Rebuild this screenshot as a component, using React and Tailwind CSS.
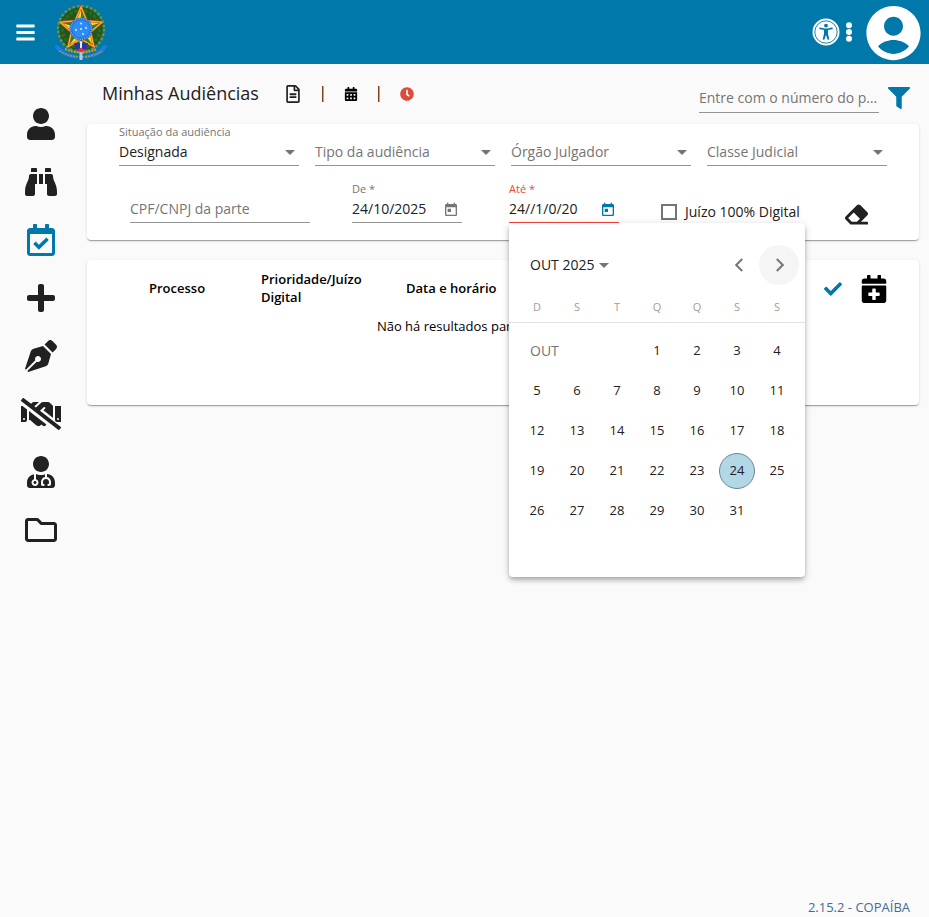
import React, { useState } from "react";
import {
  FaBars, FaRegFileAlt, FaCalendarAlt, FaClock, FaUser, FaBinoculars, FaRegCalendarCheck,
  FaPlus, FaPenNib, FaHandshakeSlash, FaUserMd, FaRegFolder, FaFilter, FaEraser, FaCheck,
  FaCalendarPlus,
} from "react-icons/fa";

function starPoints(cx, cy, outer, inner) {
  return Array.from({ length: 10 }, (_, i) => {
    const r = i % 2 === 0 ? outer : inner;
    const a = (Math.PI / 5) * i - Math.PI / 2;
    return `${(cx + r * Math.cos(a)).toFixed(2)},${(cy + r * Math.sin(a)).toFixed(2)}`;
  }).join(" ");
}

function CoatOfArms() {
  const points = starPoints(27, 26, 22, 10).split(" ");
  return (
    <svg width="54" height="58" viewBox="0 0 54 58" role="img" aria-label="Brasão da República">
      <circle cx="27" cy="26" r="22" fill="#1f5a1c" />
      <circle cx="27" cy="26" r="23" fill="none" stroke="#7d8f35" strokeWidth="2.5" strokeDasharray="2.5 2" />
      <circle cx="27" cy="26" r="18.500" fill="none" stroke="#2c6a22" strokeWidth="3" strokeDasharray="3 2" />
      <path d="M6 34 L11 31 M8 20 L13 16 M48 34 L43 31 M46 20 L41 16" stroke="#7a4a20" strokeWidth="1.2" />
      <path d="M0 43 L4 42 Q12 52 23 52 L23 56 Q7 54 0 43Z" fill="#1f7be6" />
      <path d="M54 43 L50 42 Q42 52 31 52 L31 56 Q47 54 54 43Z" fill="#1f7be6" />
      <path d="M5 48 Q27 60 49 48" fill="none" stroke="#a99b3a" strokeWidth="1.400" strokeDasharray="2 1" />
      <path d="M11 46 Q27 53 43 46" fill="none" stroke="#c0a02b" strokeWidth="2.200" strokeDasharray="2 1" />
      <polygon points={points.join(" ")} fill="#ffd52e" />
      {[0, 2, 4, 6, 8].map((i) => (
        <polygon key={i} points={`27,26 ${points[i]} ${points[i + 1]}`} fill="#168a2a" />
      ))}
      <polygon points={points.join(" ")} fill="none" stroke="#d9481c" strokeWidth="2.200" />
      <polygon points={points.join(" ")} fill="none" stroke="#fbb81c" strokeWidth="1.200" />
      <rect x="25.500" y="38" width="3" height="19" fill="#b9c6dc" />
      <path d="M20 40 L34 40 L32 47 L22 47Z" fill="#2239a8" />
      <path d="M26 39h2v7h-2z" fill="#e6ebf5" />
      <path d="M21 47 H33" stroke="#d33a4c" strokeWidth="1.200" />
      <circle cx="27" cy="47" r="2.200" fill="#dd3344" />
      <circle cx="27" cy="26" r="11.500" fill="#2a6fd0" />
      <circle cx="27" cy="26" r="10.300" fill="none" stroke="#a8d2ff" strokeWidth="1" strokeDasharray="1 1" />
      <circle cx="27" cy="26" r="8.800" fill="#2b8df5" />
      {[[27, 20.500], [22, 27], [32, 25], [27, 26], [29, 31]].map(([x, y]) => (
        <circle key={`${x}-${y}`} cx={x} cy={y} r="1" fill="#d6ebff" />
      ))}
    </svg>
  );
}

function Accessibility() {
  return (
    <svg width="28" height="28" viewBox="0 0 28 28" aria-hidden="true">
      <circle cx="14" cy="14" r="13.500" fill="#fff" />
      <circle cx="14" cy="14" r="11.200" fill="none" stroke="#0078aa" strokeWidth="0.900" />
      <circle cx="14" cy="7.600" r="1.900" fill="#0078aa" />
      <path d="M8 10.400 L12.500 11.200 H15.500 L20 10.400" stroke="#0078aa" strokeWidth="1.600" fill="none" strokeLinecap="round" />
      <path d="M12 11h4v5l1.400 5.400-1.700.4L14 17l-1.700 4.800-1.700-.4L12 16z" fill="#0078aa" />
    </svg>
  );
}

function AccountCircle() {
  return (
    <svg width="65" height="65" viewBox="0 0 24 24" fill="currentColor" aria-hidden="true">
      <path d="M12 2.200C6.480 2.200 2 6.680 2 12.200s4.480 10 10 10 10-4.480 10-10S17.520 2.200 12 2.200zm0 4c1.930 0 3.500 1.570 3.500 3.500S13.930 13.200 12 13.200s-3.500-1.570-3.500-3.500S10.070 6.200 12 6.200zm0 13.700c-2.200 0-4.300-1-5.700-2.800C7.700 15.600 9.900 14.800 12 14.800s4.300.8 5.700 2.300c-1.400 1.800-3.500 2.800-5.700 2.800z" />
    </svg>
  );
}

function TodayIcon() {
  return (
    <svg width="16" height="16" viewBox="0 0 24 24" fill="currentColor" aria-hidden="true">
      <path d="M19 3h-1V1h-2v2H8V1H6v2H5c-1.110 0-1.990.9-1.990 2L3 19c0 1.100.890 2 2 2h14c1.100 0 2-.9 2-2V5c0-1.100-.9-2-2-2zm0 16H5V8h14v11zM7 10h5v5H7z" />
    </svg>
  );
}

function Caret() {
  return (
    <svg width="10" height="5" viewBox="0 0 10 5" aria-hidden="true">
      <path d="M0 0h10L5 5z" fill="#757575" />
    </svg>
  );
}

const navItems = [
  ["Perfil", FaUser],
  ["Consultar processos", FaBinoculars],
  ["Audiências", FaRegCalendarCheck],
  ["Adicionar", FaPlus],
  ["Assinar", FaPenNib],
  ["Conciliação", FaHandshakeSlash],
  ["Perícias", FaUserMd],
  ["Pastas", FaRegFolder],
];

function Sidebar() {
  return (
    <nav className="w-[82px] shrink-0 pt-11 flex flex-col items-center gap-[26px]">
      {navItems.map(([label, Icon]) => (
        <a key={label} href="#" aria-label={label} className={label === "Audiências" ? "text-[#0078aa]" : "text-[#212121]"}>
          <Icon size={32} className={label === "Conciliação" ? "w-10" : ""} />
        </a>
      ))}
    </nav>
  );
}

function SelectField({ id, label, value }) {
  return (
    <div className="flex flex-col justify-end">
      {value && <label htmlFor={id} className="text-[11px] leading-4 text-[#757575]">{label}</label>}
      <div className="grid items-center border-b border-[#949494]">
        <select
          id={id}
          aria-label={value ? undefined : label}
          defaultValue=""
          className={`col-start-1 row-start-1 h-[25px] w-full appearance-none bg-transparent pb-[2px] text-sm outline-none ${value ? "text-[#212121]" : "text-[#757575]"}`}
        >
          <option value="">{value || label}</option>
        </select>
        <span className="pointer-events-none col-start-1 row-start-1 justify-self-end pr-1"><Caret /></span>
      </div>
    </div>
  );
}

function DateField({ id, label, initial, invalid, children }) {
  return (
    <div className="relative w-[110px]">
      <label htmlFor={id} className={`block text-[11px] leading-4 ${invalid ? "text-[#f44336]" : "text-[#757575]"}`}>{label}</label>
      <div className={`flex h-[26px] items-center justify-between border-b pr-[3px] ${invalid ? "border-[#f44336]" : "border-[#949494]"}`}>
        <input id={id} defaultValue={initial} className="w-[84px] bg-transparent pb-[2px] text-sm text-[#212121] outline-none" />
        <button type="button" aria-label="Abrir calendário" className={invalid ? "text-[#0078aa]" : "text-[#757575]"}><TodayIcon /></button>
      </div>
      {children}
    </div>
  );
}

const laterWeeks = [5, 12, 19, 26].map((start) => Array.from({ length: 7 }, (_, i) => start + i));

function Day({ day, selected, onSelect }) {
  if (day > 31) return <td />;
  return (
    <td className="h-10 w-10 p-0">
      <button
        type="button"
        onClick={() => onSelect(day)}
        className={`mx-auto flex size-9 items-center justify-center rounded-full text-[13px] text-[#212121] ${selected ? "border border-[#6d8591] bg-[#b2d7e6]" : ""}`}
      >
        {day}
      </button>
    </td>
  );
}

function Calendar() {
  const [selected, setSelected] = useState(24);
  return (
    <div className="absolute left-0 top-full z-10 h-[354px] w-[296px] rounded bg-white shadow-[0_2px_4px_-1px_rgba(0,0,0,0.2),0_4px_5px_rgba(0,0,0,0.14),0_1px_10px_rgba(0,0,0,0.12)]">
      <div className="flex items-center pl-[21px] pr-[6px] pt-[22px]">
        <button type="button" className="mr-auto flex items-center gap-[5px] text-sm text-[#212121]">
          OUT 2025 <Caret />
        </button>
        <button type="button" aria-label="Mês anterior" className="flex size-10 items-center justify-center rounded-full">
          <svg width="24" height="24" viewBox="0 0 24 24" fill="none" stroke="#757575" strokeWidth="2" aria-hidden="true"><path d="M15.200 6 9.200 12l6 6" /></svg>
        </button>
        <button type="button" aria-label="Próximo mês" className="flex size-10 items-center justify-center rounded-full bg-[#f5f5f5]">
          <svg width="24" height="24" viewBox="0 0 24 24" fill="none" stroke="#757575" strokeWidth="2" aria-hidden="true"><path d="m9.800 6 6 6-6 6" /></svg>
        </button>
      </div>
      <table className="w-full table-fixed border-collapse">
        <thead>
          <tr className="border-b border-[#e0e0e0]">
            <th className="w-2 p-0" />
            {["D", "S", "T", "Q", "Q", "S", "S"].map((d, i) => (
              <th key={i} className="h-[37px] w-10 p-0 pt-2 text-[11px] font-normal text-[#9e9e9e]">{d}</th>
            ))}
            <th className="w-2 p-0" />
          </tr>
          <tr className="h-[9px]" />
        </thead>
        <tbody>
          <tr>
            <td />
            <td colSpan={3} className="h-10 p-0 pl-[13px] text-sm text-[#757575]">OUT</td>
            {[1, 2, 3, 4].map((d) => <Day key={d} day={d} selected={d === selected} onSelect={setSelected} />)}
            <td />
          </tr>
          {laterWeeks.map((week) => (
            <tr key={week[0]}>
              <td />
              {week.map((d) => <Day key={d} day={d} selected={d === selected} onSelect={setSelected} />)}
              <td />
            </tr>
          ))}
        </tbody>
      </table>
    </div>
  );
}

const card = "rounded bg-white shadow-[0_2px_1px_-1px_rgba(0,0,0,0.2),0_1px_1px_rgba(0,0,0,0.14),0_1px_3px_rgba(0,0,0,0.12)]";

function Filters() {
  return (
    <form className={`${card} pb-[17px]`}>
      <div className="grid grid-cols-4 gap-4 px-8">
        <SelectField id="situacao" label="Situação da audiência" value="Designada" />
        <SelectField id="tipo" label="Tipo da audiência" />
        <SelectField id="orgao" label="Órgão Julgador" />
        <SelectField id="classe" label="Classe Judicial" />
      </div>
      <div className="mt-[15px] flex items-end gap-[42px] pl-[43px]">
        <input aria-label="CPF/CNPJ da parte" placeholder="CPF/CNPJ da parte" className="h-[26px] w-[180px] border-b border-[#949494] bg-transparent pb-[2px] text-sm outline-none placeholder:text-[#757575]" />
        <div className="flex gap-[47px]">
          <DateField id="de" label="De *" initial="24/10/2025" />
          <DateField id="ate" label="Até *" initial="24//1/0/20" invalid>
            <Calendar />
          </DateField>
        </div>
        <label className="flex items-center gap-2 whitespace-nowrap pb-px text-sm text-[#212121]">
          <input type="checkbox" className="size-4 appearance-none border-2 border-[#757575]" />
          Juízo 100% Digital
        </label>
        <button type="button" aria-label="Limpar filtros" className="ml-[3px] self-end text-[#212121]"><FaEraser size={23} className="-mb-[3px]" /></button>
      </div>
    </form>
  );
}

function Results() {
  return (
    <section className={`${card} h-[145px] pt-2`}>
      <table className="w-full table-fixed text-[13px] leading-[18px] text-black">
        <thead>
          <tr className="h-10 text-left font-semibold">
            <th className="w-[174px] p-0 pl-[62px] font-semibold">Processo</th>
            <th className="w-[145px] p-0 pr-8 font-semibold">Prioridade/Juízo Digital</th>
            <th className="p-0 font-semibold">Data e horário</th>
            <th className="w-[104px] p-0">
              <div className="flex items-center gap-[18px] pl-[9px] pt-[2px]">
                <button type="button" aria-label="Confirmar" className="text-[#0078aa]"><FaCheck size={18} /></button>
                <button type="button" aria-label="Nova audiência"><FaCalendarPlus size={28} /></button>
              </div>
            </th>
          </tr>
        </thead>
        <tbody>
          <tr><td colSpan={4} className="h-9 p-0 text-center">Não há resultados para o filtro informado</td></tr>
        </tbody>
      </table>
    </section>
  );
}

function Separator() {
  return <span className="h-4 w-[2px] border-l border-r border-l-[#8b3f14] border-r-[#6cb8f5]" />;
}

export default function App() {
  return (
    <div className="flex min-h-screen flex-col bg-[#fafafa] font-['Open_Sans','Noto_Sans',sans-serif] text-[#212121]">
      <header className="flex h-16 items-center bg-[#0078aa] pl-[15px] pr-[3px] text-white">
        <button type="button" aria-label="Menu"><FaBars size={21} /></button>
        <a href="#" className="ml-[18px] mr-auto"><CoatOfArms /></a>
        <button type="button" aria-label="Acessibilidade"><Accessibility /></button>
        <button type="button" aria-label="Mais opções" className="ml-[6px]">
          <svg width="6" height="20" viewBox="0 0 6 20" fill="currentColor" aria-hidden="true">
            <circle cx="3" cy="3.200" r="3" /><circle cx="3" cy="10" r="3" /><circle cx="3" cy="16.800" r="3" />
          </svg>
        </button>
        <button type="button" aria-label="Conta" className="ml-[9px]"><AccountCircle /></button>
      </header>
      <div className="flex flex-1">
        <Sidebar />
        <main className="min-w-0 flex-1 pl-[5px] pr-[10px]">
          <div className="flex h-[60px] items-center">
            <h1 className="pb-[2px] pl-[15px] text-lg">Minhas Audiências</h1>
            <div className="ml-[25px] flex items-center gap-5">
              <FaRegFileAlt size={18} />
              <Separator />
              <FaCalendarAlt size={14} className="text-black" />
              <Separator />
              <FaClock size={14} className="text-[#dd4b39]" />
            </div>
            <div className="ml-auto flex items-center gap-[9px] pr-[9px] pt-2">
              <input aria-label="Número do processo" placeholder="Entre com o número do processo" className="h-[29px] w-[180px] text-ellipsis border-b border-[#949494] bg-transparent text-sm outline-none placeholder:text-[#757575]" />
              <button type="button" aria-label="Filtrar" className="text-[#0078aa]"><FaFilter size={22} /></button>
            </div>
          </div>
          <Filters />
          <div className="h-5" />
          <Results />
        </main>
      </div>
      <footer className="pr-[19px] text-right text-[13px] leading-5 text-[#3f6e92]">2.15.2 - COPAÍBA</footer>
    </div>
  );
}
